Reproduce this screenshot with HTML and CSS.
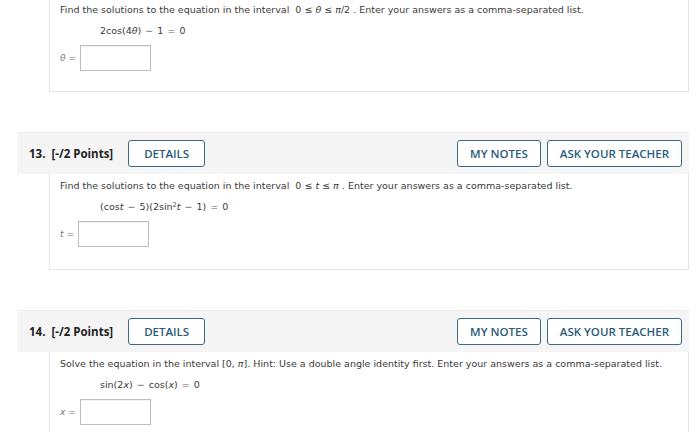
FILE: index.html
```html
<!DOCTYPE html>
<html>
<head>
<meta charset="utf-8">
<link rel="stylesheet" href="styles.css">
</head>
<body>
<div class="page">
  <section class="question">
    <div class="qbody cont">
      <p class="prompt">Find the solutions to the equation in the interval <span class="m">0 ≤ <i>θ</i> ≤ <i>π</i>/2</span> . Enter your answers as a comma-separated list.</p>
      <p class="eq">2cos(4<i>θ</i>) <span class="op">−</span> 1 <span class="op">=</span> 0</p>
      <div class="answer"><span class="lbl"><i>θ</i> =</span><span class="box"></span></div>
    </div>
  </section>

  <section class="question">
    <div class="qhead">
      <span class="qnum">13.&nbsp; [-/2 Points]</span>
      <span class="btn wide">DETAILS</span>
      <span class="spacer"></span>
      <span class="btn">MY NOTES</span>
      <span class="btn">ASK YOUR TEACHER</span>
    </div>
    <div class="qbody">
      <p class="prompt">Find the solutions to the equation in the interval <span class="m">0 ≤ <i>t</i> ≤ <i>π</i></span> . Enter your answers as a comma-separated list.</p>
      <p class="eq">(cos<i>t</i> <span class="op">−</span> 5)(2sin<sup>2</sup><i>t</i> <span class="op">−</span> 1) <span class="op">=</span> 0</p>
      <div class="answer"><span class="lbl"><i>t</i> =</span><span class="box"></span></div>
    </div>
  </section>

  <section class="question">
    <div class="qhead">
      <span class="qnum">14.&nbsp; [-/2 Points]</span>
      <span class="btn wide">DETAILS</span>
      <span class="spacer"></span>
      <span class="btn">MY NOTES</span>
      <span class="btn">ASK YOUR TEACHER</span>
    </div>
    <div class="qbody">
      <p class="prompt">Solve the equation in the interval [0, <i>π</i>]. Hint: Use a double angle identity first. Enter your answers as a comma-separated list.</p>
      <p class="eq">sin(2<i>x</i>) <span class="op">−</span> cos(<i>x</i>) <span class="op">=</span> 0</p>
      <div class="answer"><span class="lbl"><i>x</i> =</span><span class="box"></span></div>
    </div>
  </section>
</div>
</body>
</html>
```

FILE: styles.css
```css
html, body {
  margin: 0;
  padding: 0;
  background: #ffffff;
}

.page {
  width: 700px;
  height: 432px;
  overflow: hidden;
  display: flex;
  flex-direction: column;
  gap: 40px;
}

.question {
  display: flex;
  flex-direction: column;
  margin: 0 11px 0 17px;
}

.qhead {
  height: 42px;
  box-sizing: border-box;
  background: #f5f5f5;
  border-top: 1px solid #ececec;
  display: flex;
  align-items: center;
  padding: 0 7px 0 12px;
  gap: 6px;
}

.qnum {
  font-family: "Open Sans", "DejaVu Sans", sans-serif;
  font-weight: 700;
  font-size: 11.5px;
  color: #222222;
  margin-right: 9px;
}

.spacer {
  flex: 1;
}

.btn {
  height: 27px;
  box-sizing: border-box;
  border: 1.5px solid #3f6a7d;
  border-radius: 3px;
  background: #ffffff;
  color: #2a5a78;
  font-family: "Open Sans", "DejaVu Sans", sans-serif;
  font-weight: 600;
  font-size: 11.5px;
  display: flex;
  align-items: center;
  padding: 0 12px;
}

.btn.wide {
  padding: 0 15px;
}

.qbody {
  margin-left: 32px;
  border: 1px solid #e4e4e4;
  border-top: none;
  padding: 6px 10px 22px 10px;
  font-family: "DejaVu Sans", Verdana, sans-serif;
  font-size: 9.5px;
  color: #3a3a3a;
}

.qbody.cont {
  padding-top: 4px;
  padding-bottom: 20px;
}

.prompt {
  margin: 0;
  line-height: 12px;
}

.m {
  margin-left: 3px;
}

.eq {
  margin: 9px 0 0 40px;
  line-height: 12px;
}

.op {
  margin: 0 1px;
  color: #666;
}

sup {
  font-size: 6.5px;
  vertical-align: 3px;
  line-height: 0;
}

.answer {
  margin-top: 8px;
  display: flex;
  align-items: center;
  gap: 4px;
}

.lbl {
  color: #777777;
  font-size: 9px;
}

.box {
  width: 71px;
  height: 26px;
  box-sizing: border-box;
  border: 1px solid #bdbdbd;
  box-shadow: inset 0 1px 1px rgba(0,0,0,0.06);
  background: #fff;
}
```
